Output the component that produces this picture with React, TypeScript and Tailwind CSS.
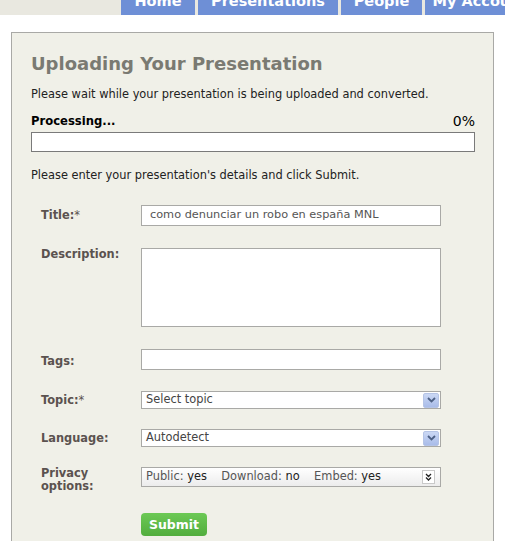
import React from "react";

const tabs = [
  { label: "Home", w: "w-[74px]" },
  { label: "Presentations", w: "w-[140px]" },
  { label: "People", w: "w-[81px]" },
  { label: "My Account", w: "w-[110px]" },
];

function SelectArrow() {
  return (
    <span className="flex h-[15px] w-[16px] items-center justify-center rounded-[2px] border border-[#b5c4e6] bg-gradient-to-b from-[#cbd8f4] to-[#a9bce9]">
      <svg width="9" height="6" viewBox="0 0 9 6">
        <path d="M1 1 L4.5 4.5 L8 1" fill="none" stroke="#4d6185" strokeWidth="1.8" />
      </svg>
    </span>
  );
}

function Row({
  label,
  children,
  className = "",
  labelPad = "",
}: {
  label: React.ReactNode;
  children: React.ReactNode;
  className?: string;
  labelPad?: string;
}) {
  return (
    <div className={`flex ${className}`}>
      <div className={`w-[110px] shrink-0 pl-[10px] text-[11.4px] font-bold leading-[13px] text-[#5b524f] ${labelPad}`}>
        {label}
      </div>
      <div>{children}</div>
    </div>
  );
}

export default function App() {
  return (
    <div className="h-[541px] w-[505px] overflow-hidden bg-white font-['DejaVu_Sans',Verdana,sans-serif]">
      <div className="flex h-[15px] items-start overflow-hidden bg-[#e9e8e0] pl-[121px]">
        {tabs.map((t) => (
          <div
            key={t.label}
            className={`${t.w} mr-[3px] flex h-[15px] shrink-0 items-start justify-center overflow-hidden bg-[#6e8fd6] text-[14.5px] font-bold leading-[15px] text-white`}
          >
            <span className="-mt-[6px] whitespace-nowrap">{t.label}</span>
          </div>
        ))}
      </div>

      <div className="mx-[11px] mt-[17px] h-[520px] border border-[#a9a9a6] bg-[#f0f0e8] pl-[19px] pr-[23px] pt-[19px]">
        <h1 className="text-[18px] font-bold leading-[24px] text-[#7a7a72]">
          Uploading Your Presentation
        </h1>
        <p className="mt-[11px] text-[11.4px] leading-[14px] text-[#222]">
          Please wait while your presentation is being uploaded and converted.
        </p>
        <div className="mt-[13px] flex w-[444px] items-end justify-between leading-[14px] text-black">
          <span className="text-[11.6px] font-bold">Processing...</span>
          <span className="text-[14px]">0%</span>
        </div>
        <div className="mt-[4px] h-[20px] w-[444px] border border-[#7a7a7a] bg-white" />
        <p className="mt-[16px] text-[11.4px] leading-[14px] text-[#222]">
          Please enter your presentation's details and click Submit.
        </p>

        <div className="mt-[23px] flex flex-col">
          <Row
            labelPad="pt-[4px]"
            label={
              <>
                Title:<span className="font-normal">*</span>
              </>
            }
          >
            <div className="flex h-[21px] w-[300px] items-center border border-[#a9a9a6] bg-white px-[8px] text-[11.3px] text-[#555]">
              como denunciar un robo en españa MNL
            </div>
          </Row>
          <Row label="Description:" className="mt-[22px]">
            <div className="h-[79px] w-[300px] border border-[#a9a9a6] bg-white" />
          </Row>
          <Row label="Tags:" labelPad="pt-[6px]" className="mt-[22px]">
            <div className="h-[21px] w-[300px] border border-[#a9a9a6] bg-white" />
          </Row>
          <Row
            labelPad="pt-[3px]"
            className="mt-[21px]"
            label={
              <>
                Topic:<span className="font-normal">*</span>
              </>
            }
          >
            <div className="flex h-[18px] w-[300px] items-center justify-between border border-[#a9a9a6] bg-white pl-[4px] pr-[1px] text-[11.4px] text-[#444]">
              <span>Select topic</span>
              <SelectArrow />
            </div>
          </Row>
          <Row label="Language:" labelPad="pt-[3px]" className="mt-[20px]">
            <div className="flex h-[18px] w-[300px] items-center justify-between border border-[#a9a9a6] bg-white pl-[4px] pr-[1px] text-[11.4px] text-[#444]">
              <span>Autodetect</span>
              <SelectArrow />
            </div>
          </Row>
          <Row
            className="mt-[20px]"
            label={
              <>
                Privacy
                <br />
                options:
              </>
            }
          >
            <div className="flex h-[20px] w-[300px] items-center justify-between border border-[#a9a9a6] bg-gradient-to-b from-white to-[#ececec] pl-[4px] pr-[5px] text-[11.4px] text-[#555]">
              <span className="whitespace-pre">
                Public: <span className="text-[#222]">yes</span>
                {"    "}Download: <span className="text-[#222]">no</span>
                {"    "}Embed: <span className="text-[#222]">yes</span>
              </span>
              <span className="flex h-[14px] w-[13px] items-center justify-center border border-[#c9c9c9] bg-white">
                <svg width="7" height="8" viewBox="0 0 7 8">
                  <path d="M1 1 L3.5 3.5 L6 1 M1 4.5 L3.5 7 L6 4.5" fill="none" stroke="#222" strokeWidth="1.3" />
                </svg>
              </span>
            </div>
          </Row>
          <div className="mt-[20px] flex pl-[110px]">
            <button className="h-[23px] w-[66px] rounded-[4px] bg-gradient-to-b from-[#6cc955] to-[#52ad3e] text-[12.5px] font-bold leading-[23px] text-white">
              Submit
            </button>
          </div>
        </div>
      </div>
    </div>
  );
}
